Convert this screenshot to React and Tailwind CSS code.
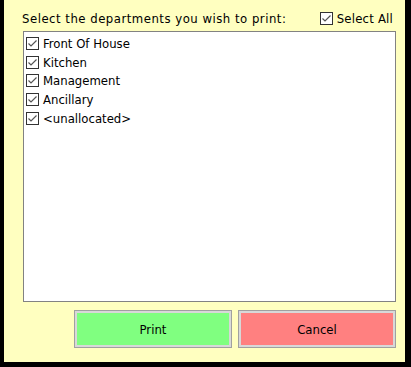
import { useState } from "react";

const departments = ["Front Of House", "Kitchen", "Management", "Ancillary", "<unallocated>"];

function Tick({ checked, onClick }) {
  return (
    <span onClick={onClick} className="w-[13px] h-[13px] shrink-0 border border-[#333333] bg-white flex items-center justify-center">
      {checked && (
        <svg width="11" height="11" viewBox="0 0 11 11">
          <path d="M1.5 5.5 L4 8 L9.5 2.5" fill="none" stroke="#555555" strokeWidth="1.2" />
        </svg>
      )}
    </span>
  );
}

export default function App() {
  const [checked, setChecked] = useState(departments.map(() => true));
  const allChecked = checked.every(Boolean);

  return (
    <div className="w-[411px] h-[367px] bg-black" style={{ fontFamily: "'DejaVu Sans Condensed', 'DejaVu Sans', sans-serif" }}>
      <div className="ml-[4px] w-[401px] h-[362px] bg-[#ffffc0] flex flex-col text-[13px] text-black leading-none">
        <div className="h-[31px] flex items-center pl-[18px] pr-[12px] pt-[6px]">
          <span className="tracking-[0.5px]">Select the  departments you wish to print:</span>
          <label className="ml-auto flex items-center gap-[4px]">
            <Tick checked={allChecked} onClick={() => setChecked(departments.map(() => !allChecked))} />
            <span className="tracking-[0.2px]">Select All</span>
          </label>
        </div>
        <div className="ml-[19px] w-[373px] h-[271px] border border-[#828282] bg-white pt-[2px] pl-[2px]">
          {departments.map((d, i) => (
            <div key={d} className="h-[18.75px] flex items-center gap-[4px]">
              <Tick checked={checked[i]} onClick={() => setChecked(checked.map((c, j) => (j === i ? !c : c)))} />
              <span>{d}</span>
            </div>
          ))}
        </div>
        <div className="flex gap-[6px] ml-[70px] mt-[8px]">
          <button className="w-[158px] h-[38px] border border-[#a0a0a0] bg-[#d8d8d8] p-[2px]">
            <span className="w-full h-full bg-[#80ff80] flex items-center justify-center">Print</span>
          </button>
          <button className="w-[158px] h-[38px] border border-[#a0a0a0] bg-[#d8d8d8] p-[2px]">
            <span className="w-full h-full bg-[#ff8080] flex items-center justify-center">Cancel</span>
          </button>
        </div>
      </div>
    </div>
  );
}
